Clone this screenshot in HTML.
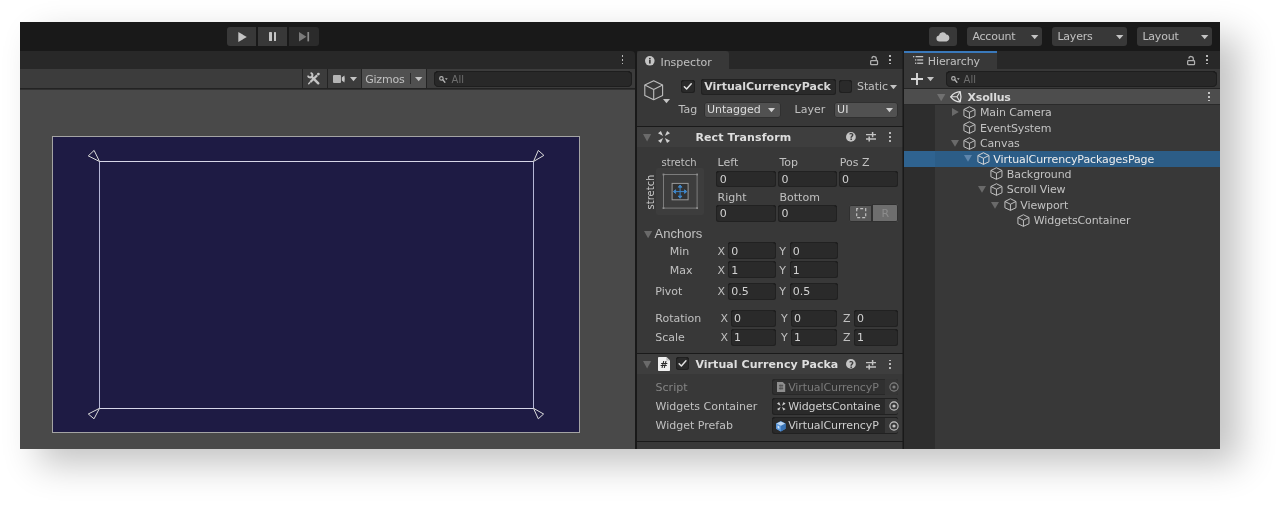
<!DOCTYPE html>
<html lang="en"><head><meta charset="utf-8"><title>Unity Editor - VirtualCurrencyPackagesPage</title>
<style>
html,body{margin:0;padding:0;background:#fff;}
body{width:1280px;height:510px;position:relative;overflow:hidden;font-family:"DejaVu Sans","Liberation Sans",sans-serif;font-size:11px;}
#root{position:absolute;left:0;top:0;width:1280px;height:510px;will-change:transform;}
#root>div,#root>span,#root>svg{position:absolute;display:block;}
#root>span{white-space:pre;}
svg{overflow:visible;}
</style></head><body><div id="root">
<div style="left:20px;top:22px;width:1200px;height:427.3px;background:#191919;box-shadow:19px 15px 34px rgba(0,0,0,.24);"></div>
<div style="left:227.4px;top:27px;width:28.7px;height:19px;background:#383838;border-radius:3px 0 0 3px;"></div>
<div style="left:257.9px;top:27px;width:29.2px;height:19px;background:#383838;border-radius:0;"></div>
<div style="left:288.7px;top:27px;width:29.9px;height:19px;background:#2b2b2b;border-radius:0 3px 3px 0;"></div>
<svg style="left:237.5px;top:31.6px;" width="9" height="10" viewBox="0 0 9 10"><path d="M.3 0L8.8 5L.3 10Z" fill="#c4c4c4"/></svg>
<div style="left:269px;top:31.7px;width:2.6px;height:9.5px;background:#c4c4c4;border-radius:.6px"></div>
<div style="left:273.6px;top:31.7px;width:2.6px;height:9.5px;background:#c4c4c4;border-radius:.6px"></div>
<svg style="left:298.8px;top:32px;" width="10.4" height="9.4" viewBox="0 0 10.4 9.4"><path d="M0 0L7.4 4.7L0 9.4Z" fill="#7a7a7a"/><rect x="8.4" y="0" width="1.7" height="9.4" fill="#8a8a8a"/></svg>
<div style="left:929px;top:27px;width:28px;height:19px;background:#383838;border-radius:3px;"></div>
<svg style="left:936px;top:31.6px;" width="14" height="9.6" viewBox="0 0 14 9.6"><path d="M3.4 9.4a3 3 0 0 1-.5-5.95A3.9 3.9 0 0 1 10.3 2.6 3.45 3.45 0 0 1 10.6 9.4Z" fill="#c4c4c4"/></svg>
<div style="left:967px;top:27px;width:75px;height:19px;background:#383838;border-radius:3px;"></div>
<span style="left:972.4px;top:29px;font-family:'DejaVu Sans','Liberation Sans',sans-serif;font-size:11px;font-weight:400;color:#c0c0c0;line-height:16px;letter-spacing:-.2px;">Account</span>
<svg style="left:1030.7px;top:34.7px;" width="7.4" height="4.2" viewBox="0 0 7.4 4.2"><path d="M0 0H7.4L3.7 4.2Z" fill="#c4c4c4"/></svg>
<div style="left:1052px;top:27px;width:75px;height:19px;background:#383838;border-radius:3px;"></div>
<span style="left:1057.4px;top:29px;font-family:'DejaVu Sans','Liberation Sans',sans-serif;font-size:11px;font-weight:400;color:#c0c0c0;line-height:16px;letter-spacing:-.2px;">Layers</span>
<svg style="left:1115.7px;top:34.7px;" width="7.4" height="4.2" viewBox="0 0 7.4 4.2"><path d="M0 0H7.4L3.7 4.2Z" fill="#c4c4c4"/></svg>
<div style="left:1137px;top:27px;width:75px;height:19px;background:#383838;border-radius:3px;"></div>
<span style="left:1142.4px;top:29px;font-family:'DejaVu Sans','Liberation Sans',sans-serif;font-size:11px;font-weight:400;color:#c0c0c0;line-height:16px;letter-spacing:-.2px;">Layout</span>
<svg style="left:1200.7px;top:34.7px;" width="7.4" height="4.2" viewBox="0 0 7.4 4.2"><path d="M0 0H7.4L3.7 4.2Z" fill="#c4c4c4"/></svg>
<div style="left:20px;top:51px;width:615px;height:18px;background:#282828;border-radius:0 4px 0 0;"></div>
<div style="left:621.6px;top:54.9px;width:1.8px;height:1.8px;background:#b8b8b8;"></div>
<div style="left:621.6px;top:58.8px;width:1.8px;height:1.8px;background:#b8b8b8;"></div>
<div style="left:621.6px;top:62.7px;width:1.8px;height:1.8px;background:#b8b8b8;"></div>
<div style="left:20px;top:69px;width:615px;height:20px;background:#3c3c3c;"></div>
<div style="left:20px;top:88px;width:615px;height:2px;background:#303030;"></div>
<div style="left:20px;top:88.4px;width:615px;height:1.0px;background:#232323;"></div>
<div style="left:20px;top:89.7px;width:615px;height:359.6px;background:#494949;"></div>
<div style="left:302.2px;top:69px;width:1.0px;height:19.2px;background:#232323;"></div>
<div style="left:327.2px;top:69px;width:1.0px;height:19.2px;background:#232323;"></div>
<div style="left:361.2px;top:69px;width:1.0px;height:19.2px;background:#232323;"></div>
<div style="left:362.2px;top:69px;width:64.2px;height:19.2px;background:#505050;"></div>
<div style="left:426.4px;top:69px;width:1.0px;height:19.2px;background:#232323;"></div>
<svg style="left:307.4px;top:72px;" width="13.4" height="13.2" viewBox="0 0 13.4 13.2"><g stroke="#c4c4c4" fill="none" stroke-linecap="round"><path d="M4.8 4.8L11.3 11.3" stroke-width="2.4"/><path d="M.9 3.6A2.3 2.3 0 1 0 3.6 .9" stroke-width="1.9" stroke-linecap="butt"/><path d="M10.2 3.2L3.4 10" stroke-width="2.3" stroke-linecap="butt"/><path d="M2.9 10.5L1.7 11.7" stroke-width="1.5"/></g><circle cx="11.4" cy="2.1" r="1.4" fill="#c4c4c4"/></svg>
<svg style="left:332.6px;top:75px;" width="12.2" height="8" viewBox="0 0 12.2 8"><rect x="0" y="0" width="8" height="8" rx="1" fill="#b4b4b4"/><path d="M8.8 2.6L11.4 .4Q12.2 4 11.4 7.6L8.8 5.4Z" fill="#c4c4c4"/></svg>
<svg style="left:349.5px;top:77.2px;" width="7" height="4.2" viewBox="0 0 7 4.2"><path d="M0 0H7L3.5 4.2Z" fill="#c4c4c4"/></svg>
<span style="left:365.2px;top:72px;font-family:'DejaVu Sans','Liberation Sans',sans-serif;font-size:11px;font-weight:400;color:#c0c0c0;line-height:16px;letter-spacing:-.22px;">Gizmos</span>
<div style="left:410px;top:73.4px;width:1px;height:10.6px;background:#2a2a2a;"></div>
<svg style="left:414.9px;top:77.2px;" width="7.4" height="4.2" viewBox="0 0 7.4 4.2"><path d="M0 0H7.4L3.7 4.2Z" fill="#c4c4c4"/></svg>
<div style="left:434px;top:71.4px;width:197.8px;height:15.2px;background:#282828;border-radius:4.5px;box-shadow:inset 0 0 0 1px #1e1e1e,inset 0 1px 0 0 #121212;"></div>
<svg style="left:438.6px;top:75.60000000000001px;" width="9" height="7" viewBox="0 0 9 7"><circle cx="2.4" cy="2.4" r="1.75" fill="none" stroke="#b4b4b4" stroke-width="1.15"/><path d="M3.8 3.8L5.9 6.2" stroke="#b4b4b4" stroke-width="1.3" stroke-linecap="round"/><path d="M5.9 2.3H8.7L7.3 3.9Z" fill="#b4b4b4"/></svg>
<span style="left:451.6px;top:72px;font-family:'DejaVu Sans','Liberation Sans',sans-serif;font-size:10px;font-weight:400;color:#6e6e6e;line-height:16px;">All</span>
<div style="left:52px;top:136px;width:528px;height:297px;background:#1e1b44;box-shadow:inset 0 0 0 1px #a4a4a4;"></div>
<svg style="left:80px;top:140px;" width="470" height="280" viewBox="0 0 470 280"><g fill="none" stroke-width="1"><path d="M19.5 21.5V268.5M453.5 21.5V268.5" stroke="#b4b6d6"/><path d="M19.5 21.5H453.5M19.5 268.5H453.5" stroke="#d6d6e8"/></g><g fill="none" stroke="#dcdcdc" stroke-width="1" stroke-linejoin="round"><path d="M19.5 21.5L8.3 15.9L14.1 10.4Z"/><path d="M453.5 21.5L458.3 10.4L463.9 15.4Z"/><path d="M19.5 268.3L8.3 274L14 278.8Z"/><path d="M453.5 268.3L463.6 274L458.3 278.8Z"/></g></svg>
<div style="left:637px;top:51px;width:265.5px;height:18px;background:#282828;"></div>
<div style="left:637px;top:51px;width:92px;height:18.5px;background:#383838;border-radius:3px 3px 0 0;"></div>
<div style="left:637px;top:69px;width:265.5px;height:380.3px;background:#383838;"></div>
<svg style="left:645.4px;top:56px;" width="9.6" height="9.6" viewBox="0 0 9.6 9.6"><circle cx="4.8" cy="4.8" r="4.8" fill="#c4c4c4"/><rect x="4" y="4" width="1.7" height="3.6" fill="#383838"/><rect x="4" y="1.9" width="1.7" height="1.5" fill="#383838"/></svg>
<span style="left:660.4px;top:55px;font-family:'DejaVu Sans','Liberation Sans',sans-serif;font-size:11px;font-weight:400;color:#c0c0c0;line-height:16px;letter-spacing:0px;">Inspector</span>
<svg style="left:870px;top:55.6px;" width="8.2" height="9.4" viewBox="0 0 8.2 9.4"><g fill="none" stroke="#b0b0b0" stroke-width="1.25"><rect x=".65" y="4.6" width="6.9" height="4.1" rx=".8"/><path d="M6.3 4.6V2.8A2.2 2.2 0 0 0 1.9 2.6"/></g></svg>
<div style="left:888.9px;top:54.9px;width:1.8px;height:1.8px;background:#b8b8b8;"></div>
<div style="left:888.9px;top:58.8px;width:1.8px;height:1.8px;background:#b8b8b8;"></div>
<div style="left:888.9px;top:62.7px;width:1.8px;height:1.8px;background:#b8b8b8;"></div>
<svg style="left:644px;top:79.6px;" width="19.4" height="20.6" viewBox="0 0 19.4 20.6"><g fill="none" stroke="#bdbdbd" stroke-width="1.1" stroke-linejoin="round"><path d="M9.7 .8L18.6 5V15.4L9.7 19.8L.8 15.4V5Z"/><path d="M.8 5L9.7 9.4L18.6 5M9.7 9.4V19.8"/></g></svg>
<svg style="left:662.5px;top:98.9px;" width="7" height="4.2" viewBox="0 0 7 4.2"><path d="M0 0H7L3.5 4.2Z" fill="#c4c4c4"/></svg>
<div style="left:681.4px;top:80px;width:13.2px;height:12.8px;background:#2a2a2a;border-radius:3px;box-shadow:inset 0 0 0 1px #202020,inset 0 1px 0 0 #101010;"></div>
<svg style="left:681.4px;top:80px;" width="13.2" height="12.8" viewBox="0 0 13 13"><path d="M3.2 6.9L5.5 9.2L10.2 3.9" fill="none" stroke="#e2e2e2" stroke-width="1.5" stroke-linecap="round" stroke-linejoin="round"/></svg>
<div style="left:701px;top:78.6px;width:134.6px;height:16.4px;background:#2a2a2a;border-radius:3px;box-shadow:inset 0 0 0 1px #212121,inset 0 1px 0 0 #0d0d0d;"></div>
<span style="left:704.2px;top:79px;font-family:'DejaVu Sans','Liberation Sans',sans-serif;font-size:11px;font-weight:700;color:#d8d8d8;line-height:16px;">VirtualCurrencyPack</span>
<div style="left:839.4px;top:80.3px;width:12.4px;height:12.7px;background:#2a2a2a;border-radius:3px;box-shadow:inset 0 0 0 1px #202020,inset 0 1px 0 0 #101010;"></div>
<span style="left:857px;top:79px;font-family:'DejaVu Sans','Liberation Sans',sans-serif;font-size:11px;font-weight:400;color:#c0c0c0;line-height:16px;letter-spacing:-.1px;">Static</span>
<svg style="left:889.7px;top:84.5px;" width="7" height="4.2" viewBox="0 0 7 4.2"><path d="M0 0H7L3.5 4.2Z" fill="#c4c4c4"/></svg>
<span style="left:678.6px;top:102px;font-family:'DejaVu Sans','Liberation Sans',sans-serif;font-size:11px;font-weight:400;color:#c0c0c0;line-height:16px;">Tag</span>
<div style="left:703.8px;top:101.9px;width:77.0px;height:15.8px;background:#515151;border-radius:3px;box-shadow:inset 0 0 0 1px #303030;"></div>
<span style="left:706.9px;top:102px;font-family:'DejaVu Sans','Liberation Sans',sans-serif;font-size:11px;font-weight:400;color:#dcdcdc;line-height:16px;">Untagged</span>
<svg style="left:768.3px;top:108.0px;" width="7" height="4.2" viewBox="0 0 7 4.2"><path d="M0 0H7L3.5 4.2Z" fill="#d0d0d0"/></svg>
<span style="left:794.6px;top:102px;font-family:'DejaVu Sans','Liberation Sans',sans-serif;font-size:11px;font-weight:400;color:#c0c0c0;line-height:16px;">Layer</span>
<div style="left:834px;top:101.9px;width:64px;height:15.8px;background:#515151;border-radius:3px;box-shadow:inset 0 0 0 1px #303030;"></div>
<span style="left:837.1px;top:102px;font-family:'DejaVu Sans','Liberation Sans',sans-serif;font-size:11px;font-weight:400;color:#dcdcdc;line-height:16px;">UI</span>
<svg style="left:885.5px;top:108.0px;" width="7" height="4.2" viewBox="0 0 7 4.2"><path d="M0 0H7L3.5 4.2Z" fill="#d0d0d0"/></svg>
<div style="left:637px;top:126px;width:265.5px;height:1px;background:#1a1a1a;"></div>
<div style="left:637px;top:127px;width:265.5px;height:20px;background:#3e3e3e;"></div>
<svg style="left:643.2px;top:134.2px;" width="8.2" height="7.4" viewBox="0 0 8.2 7.4"><path d="M0 0H8.2L4.1 7.4Z" fill="#6a6a6a"/></svg>
<svg style="left:658px;top:131px;" width="12" height="12" viewBox="0 0 12 12"><g fill="#d0d0d0"><path d="M0 2.3L2.9 0L5.1 5.1Z"/><path d="M12 2.3L9.1 0L6.9 5.1Z"/><path d="M0 9.7L2.9 12L5.1 6.9Z"/><path d="M12 9.7L9.1 12L6.9 6.9Z"/></g></svg>
<span style="left:695.4px;top:130px;font-family:'DejaVu Sans','Liberation Sans',sans-serif;font-size:11px;font-weight:700;color:#dedede;line-height:16px;letter-spacing:.12px;">Rect Transform</span>
<svg style="left:846.3px;top:132.1px;" width="9.8" height="9.8" viewBox="0 0 9.8 9.8"><circle cx="4.9" cy="4.9" r="4.9" fill="#c4c4c4"/></svg>
<span style="left:848.9px;top:129px;font-family:'DejaVu Sans','Liberation Sans',sans-serif;font-size:8.5px;font-weight:700;color:#3e3e3e;line-height:16px;">?</span>
<svg style="left:865.8px;top:132.2px;" width="10" height="9.6" viewBox="0 0 10 9.6"><g stroke="#c4c4c4" stroke-width="1.3" fill="none"><path d="M0 2.6H10M0 7H10"/><path d="M6.6 0V5.2M3.2 4.4V9.6" stroke-width="1.5"/></g></svg>
<div style="left:888.9px;top:132.2px;width:1.8px;height:1.8px;background:#b8b8b8;"></div>
<div style="left:888.9px;top:136.1px;width:1.8px;height:1.8px;background:#b8b8b8;"></div>
<div style="left:888.9px;top:140.0px;width:1.8px;height:1.8px;background:#b8b8b8;"></div>
<span style="left:661.6px;top:155px;font-family:'DejaVu Sans','Liberation Sans',sans-serif;font-size:10px;font-weight:400;color:#c0c0c0;line-height:16px;">stretch</span>
<span style="left:641.4px;top:184.4px;width:40px;text-align:center;font-family:'DejaVu Sans',sans-serif;font-size:10px;color:#c8c8c8;line-height:16px;transform:rotate(-90deg);transform-origin:50% 50%;margin-left:-10px">stretch</span>
<div style="left:656px;top:168px;width:48px;height:47px;background:#3d3d3d;border-radius:2px;"></div>
<svg style="left:662px;top:173px;" width="36" height="36" viewBox="0 0 36 36"><rect x="1.5" y="1.5" width="33.6" height="33.6" fill="none" stroke="#7c7c7c" stroke-width="1"/><g fill="#8e8e8e"><rect x=".6" y=".6" width="1.8" height="1.8"/><rect x="34.2" y=".6" width="1.8" height="1.8"/><rect x=".6" y="34.2" width="1.8" height="1.8"/><rect x="34.2" y="34.2" width="1.8" height="1.8"/></g><rect x="10.1" y="10.4" width="16" height="16.4" fill="#313131" stroke="#9a9a9a" stroke-width="1"/><g stroke="#3f86c8" stroke-width="1" fill="#3f86c8"><path d="M18.1 13.4V24M12.8 18.6H23.4" fill="none"/><path d="M18.1 12L19.9 14.2H16.3Z"/><path d="M18.1 25.3L19.9 23.1H16.3Z"/><path d="M11.4 18.6L13.6 16.8V20.4Z"/><path d="M24.8 18.6L22.6 16.8V20.4Z"/></g></svg>
<span style="left:717.6px;top:155px;font-family:'DejaVu Sans','Liberation Sans',sans-serif;font-size:11px;font-weight:400;color:#c0c0c0;line-height:16px;">Left</span>
<div style="left:716.2px;top:170.8px;width:59.4px;height:16.7px;background:#2a2a2a;border-radius:3px;box-shadow:inset 0 0 0 1px #212121,inset 0 1px 0 0 #0d0d0d;"></div>
<span style="left:719.7px;top:172px;font-family:'DejaVu Sans','Liberation Sans',sans-serif;font-size:11px;font-weight:400;color:#d2d2d2;line-height:16px;">0</span>
<span style="left:779.5px;top:155px;font-family:'DejaVu Sans','Liberation Sans',sans-serif;font-size:11px;font-weight:400;color:#c0c0c0;line-height:16px;">Top</span>
<div style="left:778.1px;top:170.8px;width:59.1px;height:16.7px;background:#2a2a2a;border-radius:3px;box-shadow:inset 0 0 0 1px #212121,inset 0 1px 0 0 #0d0d0d;"></div>
<span style="left:781.6px;top:172px;font-family:'DejaVu Sans','Liberation Sans',sans-serif;font-size:11px;font-weight:400;color:#d2d2d2;line-height:16px;">0</span>
<span style="left:839.8px;top:155px;font-family:'DejaVu Sans','Liberation Sans',sans-serif;font-size:11px;font-weight:400;color:#c0c0c0;line-height:16px;">Pos Z</span>
<div style="left:839.4px;top:170.8px;width:58.6px;height:16.7px;background:#2a2a2a;border-radius:3px;box-shadow:inset 0 0 0 1px #212121,inset 0 1px 0 0 #0d0d0d;"></div>
<span style="left:841.9px;top:172px;font-family:'DejaVu Sans','Liberation Sans',sans-serif;font-size:11px;font-weight:400;color:#d2d2d2;line-height:16px;">0</span>
<span style="left:717.6px;top:190px;font-family:'DejaVu Sans','Liberation Sans',sans-serif;font-size:11px;font-weight:400;color:#c0c0c0;line-height:16px;">Right</span>
<div style="left:716.2px;top:205.3px;width:59.4px;height:17.1px;background:#2a2a2a;border-radius:3px;box-shadow:inset 0 0 0 1px #212121,inset 0 1px 0 0 #0d0d0d;"></div>
<span style="left:719.7px;top:206px;font-family:'DejaVu Sans','Liberation Sans',sans-serif;font-size:11px;font-weight:400;color:#d2d2d2;line-height:16px;">0</span>
<span style="left:779.5px;top:190px;font-family:'DejaVu Sans','Liberation Sans',sans-serif;font-size:11px;font-weight:400;color:#c0c0c0;line-height:16px;">Bottom</span>
<div style="left:778.1px;top:205.3px;width:59.1px;height:17.1px;background:#2a2a2a;border-radius:3px;box-shadow:inset 0 0 0 1px #212121,inset 0 1px 0 0 #0d0d0d;"></div>
<span style="left:781.6px;top:206px;font-family:'DejaVu Sans','Liberation Sans',sans-serif;font-size:11px;font-weight:400;color:#d2d2d2;line-height:16px;">0</span>
<div style="left:849px;top:204.5px;width:22.6px;height:17.3px;background:#585858;border-radius:2px 0 0 2px;box-shadow:inset 0 0 0 1px #303030;"></div>
<svg style="left:855.6px;top:208.2px;" width="10.4" height="10.4" viewBox="0 0 10.4 10.4"><rect x=".7" y=".7" width="9" height="9" fill="none" stroke="#c0c0c0" stroke-width="1.2" stroke-dasharray="3 2" stroke-dashoffset="1.5"/></svg>
<div style="left:872.4px;top:203.6px;width:25.6px;height:18.4px;background:#6e6e6e;border-radius:0 2px 2px 0;box-shadow:inset 0 0 0 1px #303030;"></div>
<span style="left:881.4px;top:206px;font-family:'DejaVu Sans','Liberation Sans',sans-serif;font-size:11px;font-weight:400;color:#8c8c8c;line-height:16px;">R</span>
<svg style="left:643.8px;top:230.6px;" width="8.2" height="7.2" viewBox="0 0 8.2 7.2"><path d="M0 0H8.2L4.1 7.2Z" fill="#6a6a6a"/></svg>
<span style="left:654.6px;top:226px;font-family:'Liberation Sans',sans-serif;font-size:13px;font-weight:400;color:#c0c0c0;line-height:16px;">Anchors</span>
<span style="left:669.8px;top:244px;font-family:'DejaVu Sans','Liberation Sans',sans-serif;font-size:11px;font-weight:400;color:#c0c0c0;line-height:16px;">Min</span>
<span style="left:717.4px;top:244px;font-family:'DejaVu Sans','Liberation Sans',sans-serif;font-size:11px;font-weight:400;color:#c0c0c0;line-height:16px;">X</span>
<div style="left:728px;top:242.2px;width:47.6px;height:16.8px;background:#2a2a2a;border-radius:3px;box-shadow:inset 0 0 0 1px #212121,inset 0 1px 0 0 #0d0d0d;"></div>
<span style="left:731.3px;top:244px;font-family:'DejaVu Sans','Liberation Sans',sans-serif;font-size:11px;font-weight:400;color:#d2d2d2;line-height:16px;">0</span>
<span style="left:779.2px;top:244px;font-family:'DejaVu Sans','Liberation Sans',sans-serif;font-size:11px;font-weight:400;color:#c0c0c0;line-height:16px;">Y</span>
<div style="left:789.5px;top:242.2px;width:48.0px;height:16.8px;background:#2a2a2a;border-radius:3px;box-shadow:inset 0 0 0 1px #212121,inset 0 1px 0 0 #0d0d0d;"></div>
<span style="left:792.8px;top:244px;font-family:'DejaVu Sans','Liberation Sans',sans-serif;font-size:11px;font-weight:400;color:#d2d2d2;line-height:16px;">0</span>
<span style="left:669.8px;top:263px;font-family:'DejaVu Sans','Liberation Sans',sans-serif;font-size:11px;font-weight:400;color:#c0c0c0;line-height:16px;">Max</span>
<span style="left:717.4px;top:263px;font-family:'DejaVu Sans','Liberation Sans',sans-serif;font-size:11px;font-weight:400;color:#c0c0c0;line-height:16px;">X</span>
<div style="left:728px;top:261.4px;width:47.6px;height:16.9px;background:#2a2a2a;border-radius:3px;box-shadow:inset 0 0 0 1px #212121,inset 0 1px 0 0 #0d0d0d;"></div>
<span style="left:731.3px;top:263px;font-family:'DejaVu Sans','Liberation Sans',sans-serif;font-size:11px;font-weight:400;color:#d2d2d2;line-height:16px;">1</span>
<span style="left:779.2px;top:263px;font-family:'DejaVu Sans','Liberation Sans',sans-serif;font-size:11px;font-weight:400;color:#c0c0c0;line-height:16px;">Y</span>
<div style="left:789.5px;top:261.4px;width:48.0px;height:16.9px;background:#2a2a2a;border-radius:3px;box-shadow:inset 0 0 0 1px #212121,inset 0 1px 0 0 #0d0d0d;"></div>
<span style="left:792.8px;top:263px;font-family:'DejaVu Sans','Liberation Sans',sans-serif;font-size:11px;font-weight:400;color:#d2d2d2;line-height:16px;">1</span>
<span style="left:655.3px;top:284px;font-family:'DejaVu Sans','Liberation Sans',sans-serif;font-size:11px;font-weight:400;color:#c0c0c0;line-height:16px;">Pivot</span>
<span style="left:717.4px;top:284px;font-family:'DejaVu Sans','Liberation Sans',sans-serif;font-size:11px;font-weight:400;color:#c0c0c0;line-height:16px;">X</span>
<div style="left:728px;top:283px;width:47.6px;height:16.8px;background:#2a2a2a;border-radius:3px;box-shadow:inset 0 0 0 1px #212121,inset 0 1px 0 0 #0d0d0d;"></div>
<span style="left:731.3px;top:284px;font-family:'DejaVu Sans','Liberation Sans',sans-serif;font-size:11px;font-weight:400;color:#d2d2d2;line-height:16px;">0.5</span>
<span style="left:779.2px;top:284px;font-family:'DejaVu Sans','Liberation Sans',sans-serif;font-size:11px;font-weight:400;color:#c0c0c0;line-height:16px;">Y</span>
<div style="left:789.5px;top:283px;width:48.0px;height:16.8px;background:#2a2a2a;border-radius:3px;box-shadow:inset 0 0 0 1px #212121,inset 0 1px 0 0 #0d0d0d;"></div>
<span style="left:792.8px;top:284px;font-family:'DejaVu Sans','Liberation Sans',sans-serif;font-size:11px;font-weight:400;color:#d2d2d2;line-height:16px;">0.5</span>
<span style="left:655.3px;top:311px;font-family:'DejaVu Sans','Liberation Sans',sans-serif;font-size:11px;font-weight:400;color:#c0c0c0;line-height:16px;">Rotation</span>
<span style="left:720.4px;top:311px;font-family:'DejaVu Sans','Liberation Sans',sans-serif;font-size:11px;font-weight:400;color:#c0c0c0;line-height:16px;">X</span>
<div style="left:730.8px;top:309.9px;width:44.8px;height:16.7px;background:#2a2a2a;border-radius:3px;box-shadow:inset 0 0 0 1px #212121,inset 0 1px 0 0 #0d0d0d;"></div>
<span style="left:734.0999999999999px;top:311px;font-family:'DejaVu Sans','Liberation Sans',sans-serif;font-size:11px;font-weight:400;color:#d2d2d2;line-height:16px;">0</span>
<span style="left:781px;top:311px;font-family:'DejaVu Sans','Liberation Sans',sans-serif;font-size:11px;font-weight:400;color:#c0c0c0;line-height:16px;">Y</span>
<div style="left:790.8px;top:309.9px;width:46.0px;height:16.7px;background:#2a2a2a;border-radius:3px;box-shadow:inset 0 0 0 1px #212121,inset 0 1px 0 0 #0d0d0d;"></div>
<span style="left:794.0999999999999px;top:311px;font-family:'DejaVu Sans','Liberation Sans',sans-serif;font-size:11px;font-weight:400;color:#d2d2d2;line-height:16px;">0</span>
<span style="left:843px;top:311px;font-family:'DejaVu Sans','Liberation Sans',sans-serif;font-size:11px;font-weight:400;color:#c0c0c0;line-height:16px;">Z</span>
<div style="left:853.6px;top:309.9px;width:44.4px;height:16.7px;background:#2a2a2a;border-radius:3px;box-shadow:inset 0 0 0 1px #212121,inset 0 1px 0 0 #0d0d0d;"></div>
<span style="left:856.9px;top:311px;font-family:'DejaVu Sans','Liberation Sans',sans-serif;font-size:11px;font-weight:400;color:#d2d2d2;line-height:16px;">0</span>
<span style="left:655.3px;top:330px;font-family:'DejaVu Sans','Liberation Sans',sans-serif;font-size:11px;font-weight:400;color:#c0c0c0;line-height:16px;">Scale</span>
<span style="left:720.4px;top:330px;font-family:'DejaVu Sans','Liberation Sans',sans-serif;font-size:11px;font-weight:400;color:#c0c0c0;line-height:16px;">X</span>
<div style="left:730.8px;top:329.2px;width:44.8px;height:16.8px;background:#2a2a2a;border-radius:3px;box-shadow:inset 0 0 0 1px #212121,inset 0 1px 0 0 #0d0d0d;"></div>
<span style="left:734.0999999999999px;top:330px;font-family:'DejaVu Sans','Liberation Sans',sans-serif;font-size:11px;font-weight:400;color:#d2d2d2;line-height:16px;">1</span>
<span style="left:781px;top:330px;font-family:'DejaVu Sans','Liberation Sans',sans-serif;font-size:11px;font-weight:400;color:#c0c0c0;line-height:16px;">Y</span>
<div style="left:790.8px;top:329.2px;width:46.0px;height:16.8px;background:#2a2a2a;border-radius:3px;box-shadow:inset 0 0 0 1px #212121,inset 0 1px 0 0 #0d0d0d;"></div>
<span style="left:794.0999999999999px;top:330px;font-family:'DejaVu Sans','Liberation Sans',sans-serif;font-size:11px;font-weight:400;color:#d2d2d2;line-height:16px;">1</span>
<span style="left:843px;top:330px;font-family:'DejaVu Sans','Liberation Sans',sans-serif;font-size:11px;font-weight:400;color:#c0c0c0;line-height:16px;">Z</span>
<div style="left:853.6px;top:329.2px;width:44.4px;height:16.8px;background:#2a2a2a;border-radius:3px;box-shadow:inset 0 0 0 1px #212121,inset 0 1px 0 0 #0d0d0d;"></div>
<span style="left:856.9px;top:330px;font-family:'DejaVu Sans','Liberation Sans',sans-serif;font-size:11px;font-weight:400;color:#d2d2d2;line-height:16px;">1</span>
<div style="left:637px;top:353px;width:265.5px;height:1px;background:#1a1a1a;"></div>
<div style="left:637px;top:354px;width:265.5px;height:19.6px;background:#3e3e3e;"></div>
<svg style="left:643.2px;top:360.6px;" width="8.2" height="7.4" viewBox="0 0 8.2 7.4"><path d="M0 0H8.2L4.1 7.4Z" fill="#6a6a6a"/></svg>
<svg style="left:658px;top:356.8px;" width="12" height="14" viewBox="0 0 12 14"><path d="M0 .8Q0 0 .8 0H8.4L12 3.6V13.2Q12 14 11.2 14H.8Q0 14 0 13.2Z" fill="#f0f0f0"/><path d="M8.4 0L12 3.6H8.4Z" fill="#bdbdbd"/></svg>
<span style="left:660px;top:357px;font-family:'DejaVu Sans','Liberation Sans',sans-serif;font-size:9.5px;font-weight:700;color:#2a2a2a;line-height:16px;">#</span>
<div style="left:676px;top:357.3px;width:12.7px;height:12.7px;background:#2a2a2a;border-radius:3px;box-shadow:inset 0 0 0 1px #202020,inset 0 1px 0 0 #101010;"></div>
<svg style="left:676px;top:357.3px;" width="12.7" height="12.7" viewBox="0 0 13 13"><path d="M3.2 6.9L5.5 9.2L10.2 3.9" fill="none" stroke="#e2e2e2" stroke-width="1.5" stroke-linecap="round" stroke-linejoin="round"/></svg>
<span style="left:695.4px;top:357px;font-family:'DejaVu Sans','Liberation Sans',sans-serif;font-size:11px;font-weight:700;color:#dedede;line-height:16px;letter-spacing:.06px;">Virtual Currency Packa</span>
<svg style="left:846.3px;top:359.40000000000003px;" width="9.8" height="9.8" viewBox="0 0 9.8 9.8"><circle cx="4.9" cy="4.9" r="4.9" fill="#c4c4c4"/></svg>
<span style="left:848.9px;top:357px;font-family:'DejaVu Sans','Liberation Sans',sans-serif;font-size:8.5px;font-weight:700;color:#3e3e3e;line-height:16px;">?</span>
<svg style="left:865.8px;top:359.5px;" width="10" height="9.6" viewBox="0 0 10 9.6"><g stroke="#c4c4c4" stroke-width="1.3" fill="none"><path d="M0 2.6H10M0 7H10"/><path d="M6.6 0V5.2M3.2 4.4V9.6" stroke-width="1.5"/></g></svg>
<div style="left:888.9px;top:359.5px;width:1.8px;height:1.8px;background:#b8b8b8;"></div>
<div style="left:888.9px;top:363.4px;width:1.8px;height:1.8px;background:#b8b8b8;"></div>
<div style="left:888.9px;top:367.3px;width:1.8px;height:1.8px;background:#b8b8b8;"></div>
<span style="left:655.6px;top:380px;font-family:'DejaVu Sans','Liberation Sans',sans-serif;font-size:11px;font-weight:400;color:#848484;line-height:16px;">Script</span>
<div style="left:772px;top:378.7px;width:126px;height:16.5px;background:#303030;border-radius:3px;box-shadow:inset 0 0 0 1px #282828,inset 0 1px 0 0 #1e1e1e;"></div>
<div style="left:885.4px;top:379.3px;width:13.0px;height:15.5px;background:#363636;border-radius:0 2px 2px 0;"></div>
<svg style="left:888.7px;top:382.05px;" width="10" height="10" viewBox="0 0 10 10"><circle cx="5" cy="5" r="4.1" fill="none" stroke="#808080" stroke-width="1.1"/><circle cx="5" cy="5" r="1.6" fill="#808080"/></svg>
<svg style="left:776.6px;top:382px" width="8.2" height="10" viewBox="0 0 8.2 10"><path d="M0 0H5.8L8.2 2.4V10H0Z" fill="#8e8e8e"/><path d="M2 3.6H6.2M2 6.4H6.2M3.2 2.4V7.8M5 2.4V7.8" stroke="#4a4a4a" stroke-width=".8" fill="none"/></svg>
<span style="left:788.2px;top:380px;font-family:'DejaVu Sans','Liberation Sans',sans-serif;font-size:11px;font-weight:400;color:#7a7a7a;line-height:16px;letter-spacing:-.1px;">VirtualCurrencyP</span>
<span style="left:655.6px;top:399px;font-family:'DejaVu Sans','Liberation Sans',sans-serif;font-size:11px;font-weight:400;color:#c0c0c0;line-height:16px;">Widgets Container</span>
<div style="left:772px;top:398px;width:126px;height:16.7px;background:#2a2a2a;border-radius:3px;box-shadow:inset 0 0 0 1px #212121,inset 0 1px 0 0 #0d0d0d;"></div>
<div style="left:885.4px;top:398.6px;width:13.0px;height:15.7px;background:#393939;border-radius:0 2px 2px 0;"></div>
<svg style="left:888.7px;top:401.45px;" width="10" height="10" viewBox="0 0 10 10"><circle cx="5" cy="5" r="4.1" fill="none" stroke="#c4c4c4" stroke-width="1.1"/><circle cx="5" cy="5" r="1.6" fill="#c4c4c4"/></svg>
<svg style="left:776.6px;top:402px" width="8.6" height="8.6" viewBox="0 0 12 12"><g fill="#d0d0d0"><path d="M0 2.3L2.9 0L5.1 5.1Z"/><path d="M12 2.3L9.1 0L6.9 5.1Z"/><path d="M0 9.7L2.9 12L5.1 6.9Z"/><path d="M12 9.7L9.1 12L6.9 6.9Z"/></g></svg>
<span style="left:788.2px;top:399px;font-family:'DejaVu Sans','Liberation Sans',sans-serif;font-size:11px;font-weight:400;color:#cecece;line-height:16px;letter-spacing:-.1px;">WidgetsContaine</span>
<span style="left:655.6px;top:418px;font-family:'DejaVu Sans','Liberation Sans',sans-serif;font-size:11px;font-weight:400;color:#c0c0c0;line-height:16px;">Widget Prefab</span>
<div style="left:772px;top:417.4px;width:126px;height:16.4px;background:#2a2a2a;border-radius:3px;box-shadow:inset 0 0 0 1px #212121,inset 0 1px 0 0 #0d0d0d;"></div>
<div style="left:885.4px;top:418.0px;width:13.0px;height:15.4px;background:#393939;border-radius:0 2px 2px 0;"></div>
<svg style="left:888.7px;top:420.7px;" width="10" height="10" viewBox="0 0 10 10"><circle cx="5" cy="5" r="4.1" fill="none" stroke="#c4c4c4" stroke-width="1.1"/><circle cx="5" cy="5" r="1.6" fill="#c4c4c4"/></svg>
<svg style="left:776.2px;top:420.6px" width="9.6" height="10.4" viewBox="0 0 9.6 10.4"><path d="M4.8 0L9.6 2.4V7.8L4.8 10.4L0 7.8V2.4Z" fill="#4a86c8"/><path d="M4.8 5L9.6 2.4V7.8L4.8 10.4Z" fill="#3a74b6"/><path d="M4.8 5L0 2.4V7.8L4.8 10.4Z" fill="#5b98dc"/><path d="M4.8 .4L9.2 2.5L4.8 4.7L.4 2.5Z" fill="#bcd6f2"/><path d="M1.6 4.6L3.4 5.6V8L1.6 7Z" fill="#cfe2f6"/></svg>
<span style="left:788.2px;top:418px;font-family:'DejaVu Sans','Liberation Sans',sans-serif;font-size:11px;font-weight:400;color:#cecece;line-height:16px;letter-spacing:-.1px;">VirtualCurrencyP</span>
<div style="left:637px;top:440.7px;width:265.5px;height:1.0px;background:#1a1a1a;"></div>
<div style="left:902px;top:51px;width:1px;height:398.3px;background:rgba(25,25,25,.55);"></div>
<div style="left:904px;top:51px;width:316px;height:18px;background:#282828;"></div>
<div style="left:904px;top:51px;width:93px;height:18.5px;background:#383838;border-radius:2px 2px 0 0;"></div>
<div style="left:904px;top:51px;width:93px;height:2px;background:#3a79bb;"></div>
<svg style="left:912.6px;top:56px;" width="10.2" height="8" viewBox="0 0 10.2 8"><g fill="#c4c4c4"><rect x="0" y="0" width="1.3" height="1.3"/><rect x="2.6" y="0" width="7.6" height="1.3"/><rect x="2" y="3.3" width="1.3" height="1.3"/><rect x="4.2" y="3.3" width="6" height="1.3"/><rect x="2" y="6.6" width="1.3" height="1.3"/><rect x="4.2" y="6.6" width="6" height="1.3"/></g></svg>
<span style="left:927.8px;top:54px;font-family:'DejaVu Sans','Liberation Sans',sans-serif;font-size:11px;font-weight:400;color:#c0c0c0;line-height:16px;letter-spacing:-.12px;">Hierarchy</span>
<svg style="left:1187.4px;top:55.6px;" width="8.2" height="9.4" viewBox="0 0 8.2 9.4"><g fill="none" stroke="#b0b0b0" stroke-width="1.25"><rect x=".65" y="4.6" width="6.9" height="4.1" rx=".8"/><path d="M6.3 4.6V2.8A2.2 2.2 0 0 0 1.9 2.6"/></g></svg>
<div style="left:1206.1px;top:54.9px;width:1.8px;height:1.8px;background:#b8b8b8;"></div>
<div style="left:1206.1px;top:58.8px;width:1.8px;height:1.8px;background:#b8b8b8;"></div>
<div style="left:1206.1px;top:62.7px;width:1.8px;height:1.8px;background:#b8b8b8;"></div>
<div style="left:904px;top:69px;width:316px;height:19px;background:#383838;"></div>
<div style="left:904px;top:88px;width:316px;height:1.3px;background:#242424;"></div>
<svg style="left:910.8px;top:73.2px;" width="12" height="12" viewBox="0 0 12 12"><path d="M6 0V12M0 6H12" stroke="#d8d8d8" stroke-width="1.9" fill="none"/></svg>
<svg style="left:927.0px;top:77.1px;" width="7" height="4.2" viewBox="0 0 7 4.2"><path d="M0 0H7L3.5 4.2Z" fill="#c4c4c4"/></svg>
<div style="left:946px;top:71.4px;width:271.4px;height:15.2px;background:#282828;border-radius:4.5px;box-shadow:inset 0 0 0 1px #1e1e1e,inset 0 1px 0 0 #121212;"></div>
<svg style="left:950.6px;top:75.60000000000001px;" width="9" height="7" viewBox="0 0 9 7"><circle cx="2.4" cy="2.4" r="1.75" fill="none" stroke="#b4b4b4" stroke-width="1.15"/><path d="M3.8 3.8L5.9 6.2" stroke="#b4b4b4" stroke-width="1.3" stroke-linecap="round"/><path d="M5.9 2.3H8.7L7.3 3.9Z" fill="#b4b4b4"/></svg>
<span style="left:963.6px;top:72px;font-family:'DejaVu Sans','Liberation Sans',sans-serif;font-size:10px;font-weight:400;color:#6e6e6e;line-height:16px;">All</span>
<div style="left:904px;top:89.3px;width:316px;height:360.0px;background:#383838;"></div>
<div style="left:904px;top:104.8px;width:31px;height:344.5px;background:#2d2d2d;"></div>
<div style="left:904px;top:89.3px;width:316px;height:14.5px;background:#4d4d4d;"></div>
<div style="left:904px;top:103.8px;width:316px;height:1.1px;background:#2a2a2a;"></div>
<div style="left:904px;top:151px;width:316px;height:16px;background:#2c5d87;"></div>
<div style="left:904px;top:151px;width:31px;height:16px;background:#2f6390;"></div>
<svg style="left:937.4px;top:94px;" width="8.4" height="7.2" viewBox="0 0 8.4 7.2"><path d="M0 0H8.4L4.2 7.2Z" fill="#707070"/></svg>
<svg style="left:950px;top:90.8px;" width="11.6" height="11.6" viewBox="0 0 11.6 11.6"><g fill="none" stroke="#e0e0e0" stroke-linejoin="round" stroke-linecap="round"><path d="M.7 5.8Q4.6 .9 10.2 .7Q11.7 5.8 10.2 10.9Q4.6 10.7 .7 5.8Z" stroke-width="1.25"/><path d="M7 5.8H.9M7 5.8L10 1M7 5.8L10 10.6" stroke-width="1.1"/></g></svg>
<span style="left:967.6px;top:90px;font-family:'DejaVu Sans','Liberation Sans',sans-serif;font-size:11px;font-weight:700;color:#dadada;line-height:16px;letter-spacing:-.2px;">Xsollus</span>
<div style="left:1207.85px;top:91.75px;width:1.9px;height:1.9px;background:#c4c4c4;"></div>
<div style="left:1207.85px;top:95.65px;width:1.9px;height:1.9px;background:#c4c4c4;"></div>
<div style="left:1207.85px;top:99.55px;width:1.9px;height:1.9px;background:#c4c4c4;"></div>
<svg style="left:963.2px;top:105.7px;" width="12.9" height="13.08" viewBox="0 0 14 14.2"><g fill="none" stroke="#c4c4c4" stroke-width="1.05" stroke-linejoin="round"><path d="M7 .8L13 3.8V10.6L7 13.4L1 10.6V3.8Z"/><path d="M1 3.8L7 6.8L13 3.8M7 6.8V13.4"/></g></svg>
<span style="left:979.9px;top:105px;font-family:'DejaVu Sans','Liberation Sans',sans-serif;font-size:11px;font-weight:400;color:#c2c2c2;line-height:16px;letter-spacing:-.1px;">Main Camera</span>
<svg style="left:951.8px;top:108.3px;" width="6.8" height="8" viewBox="0 0 6.8 8"><path d="M0 0L6.8 4L0 8Z" fill="#6a6a6a"/></svg>
<svg style="left:963.2px;top:121.1px;" width="12.9" height="13.08" viewBox="0 0 14 14.2"><g fill="none" stroke="#c4c4c4" stroke-width="1.05" stroke-linejoin="round"><path d="M7 .8L13 3.8V10.6L7 13.4L1 10.6V3.8Z"/><path d="M1 3.8L7 6.8L13 3.8M7 6.8V13.4"/></g></svg>
<span style="left:979.9px;top:121px;font-family:'DejaVu Sans','Liberation Sans',sans-serif;font-size:11px;font-weight:400;color:#c2c2c2;line-height:16px;letter-spacing:-.1px;">EventSystem</span>
<svg style="left:963.2px;top:136.5px;" width="12.9" height="13.08" viewBox="0 0 14 14.2"><g fill="none" stroke="#c4c4c4" stroke-width="1.05" stroke-linejoin="round"><path d="M7 .8L13 3.8V10.6L7 13.4L1 10.6V3.8Z"/><path d="M1 3.8L7 6.8L13 3.8M7 6.8V13.4"/></g></svg>
<span style="left:979.9px;top:136px;font-family:'DejaVu Sans','Liberation Sans',sans-serif;font-size:11px;font-weight:400;color:#c2c2c2;line-height:16px;letter-spacing:-.1px;">Canvas</span>
<svg style="left:951.0px;top:139.9px;" width="8" height="6.8" viewBox="0 0 8 6.8"><path d="M0 0H8L4 6.8Z" fill="#6a6a6a"/></svg>
<svg style="left:976.67px;top:151.9px;" width="12.9" height="13.08" viewBox="0 0 14 14.2"><g fill="none" stroke="#d8d8d8" stroke-width="1.05" stroke-linejoin="round"><path d="M7 .8L13 3.8V10.6L7 13.4L1 10.6V3.8Z"/><path d="M1 3.8L7 6.8L13 3.8M7 6.8V13.4"/></g></svg>
<span style="left:993.37px;top:152px;font-family:'DejaVu Sans','Liberation Sans',sans-serif;font-size:11px;font-weight:400;color:#eeeeee;line-height:16px;letter-spacing:-.1px;">VirtualCurrencyPackagesPage</span>
<svg style="left:964.47px;top:155.3px;" width="8" height="6.8" viewBox="0 0 8 6.8"><path d="M0 0H8L4 6.8Z" fill="#5f86ac"/></svg>
<svg style="left:990.14px;top:167.3px;" width="12.9" height="13.08" viewBox="0 0 14 14.2"><g fill="none" stroke="#c4c4c4" stroke-width="1.05" stroke-linejoin="round"><path d="M7 .8L13 3.8V10.6L7 13.4L1 10.6V3.8Z"/><path d="M1 3.8L7 6.8L13 3.8M7 6.8V13.4"/></g></svg>
<span style="left:1006.84px;top:167px;font-family:'DejaVu Sans','Liberation Sans',sans-serif;font-size:11px;font-weight:400;color:#c2c2c2;line-height:16px;letter-spacing:-.1px;">Background</span>
<svg style="left:990.14px;top:182.7px;" width="12.9" height="13.08" viewBox="0 0 14 14.2"><g fill="none" stroke="#c4c4c4" stroke-width="1.05" stroke-linejoin="round"><path d="M7 .8L13 3.8V10.6L7 13.4L1 10.6V3.8Z"/><path d="M1 3.8L7 6.8L13 3.8M7 6.8V13.4"/></g></svg>
<span style="left:1006.84px;top:182px;font-family:'DejaVu Sans','Liberation Sans',sans-serif;font-size:11px;font-weight:400;color:#c2c2c2;line-height:16px;letter-spacing:-.1px;">Scroll View</span>
<svg style="left:977.94px;top:186.1px;" width="8" height="6.8" viewBox="0 0 8 6.8"><path d="M0 0H8L4 6.8Z" fill="#6a6a6a"/></svg>
<svg style="left:1003.61px;top:198.1px;" width="12.9" height="13.08" viewBox="0 0 14 14.2"><g fill="none" stroke="#c4c4c4" stroke-width="1.05" stroke-linejoin="round"><path d="M7 .8L13 3.8V10.6L7 13.4L1 10.6V3.8Z"/><path d="M1 3.8L7 6.8L13 3.8M7 6.8V13.4"/></g></svg>
<span style="left:1020.31px;top:198px;font-family:'DejaVu Sans','Liberation Sans',sans-serif;font-size:11px;font-weight:400;color:#c2c2c2;line-height:16px;letter-spacing:-.1px;">Viewport</span>
<svg style="left:991.41px;top:201.5px;" width="8" height="6.8" viewBox="0 0 8 6.8"><path d="M0 0H8L4 6.8Z" fill="#6a6a6a"/></svg>
<svg style="left:1017.08px;top:213.5px;" width="12.9" height="13.08" viewBox="0 0 14 14.2"><g fill="none" stroke="#c4c4c4" stroke-width="1.05" stroke-linejoin="round"><path d="M7 .8L13 3.8V10.6L7 13.4L1 10.6V3.8Z"/><path d="M1 3.8L7 6.8L13 3.8M7 6.8V13.4"/></g></svg>
<span style="left:1033.78px;top:213px;font-family:'DejaVu Sans','Liberation Sans',sans-serif;font-size:11px;font-weight:400;color:#c2c2c2;line-height:16px;letter-spacing:-.1px;">WidgetsContainer</span>
</div></body></html>
